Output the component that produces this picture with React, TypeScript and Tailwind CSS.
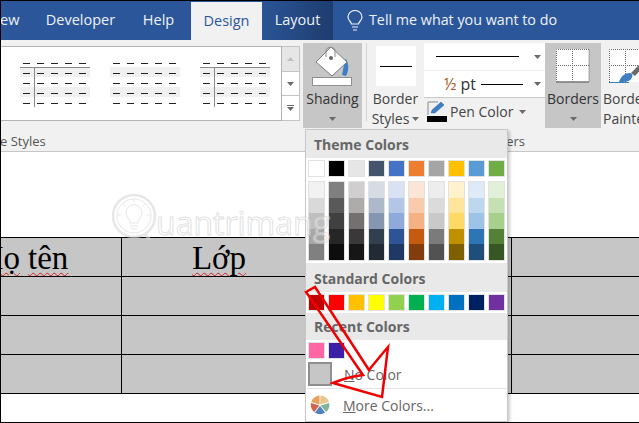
const themeTop = ['bg-[#ffffff]', 'bg-[#000000]', 'bg-[#e7e6e6]', 'bg-[#44546a]', 'bg-[#4472c4]', 'bg-[#ed7d31]', 'bg-[#a5a5a5]', 'bg-[#ffc000]', 'bg-[#5b9bd5]', 'bg-[#70ad47]']

const themeTints = [
  ['bg-[#f2f2f2]', 'bg-[#d9d9d9]', 'bg-[#bfbfbf]', 'bg-[#a6a6a6]', 'bg-[#808080]'],
  ['bg-[#7f7f7f]', 'bg-[#595959]', 'bg-[#404040]', 'bg-[#262626]', 'bg-[#0d0d0d]'],
  ['bg-[#d0cece]', 'bg-[#aeabab]', 'bg-[#757070]', 'bg-[#3a3838]', 'bg-[#171616]'],
  ['bg-[#d6dce4]', 'bg-[#adb9ca]', 'bg-[#8496b0]', 'bg-[#323f4f]', 'bg-[#222a35]'],
  ['bg-[#d9e2f3]', 'bg-[#b4c6e7]', 'bg-[#8eaadb]', 'bg-[#2f5496]', 'bg-[#1f3864]'],
  ['bg-[#fbe5d5]', 'bg-[#f7cbac]', 'bg-[#f4b183]', 'bg-[#c55a11]', 'bg-[#833c0b]'],
  ['bg-[#ededed]', 'bg-[#dbdbdb]', 'bg-[#c9c9c9]', 'bg-[#7b7b7b]', 'bg-[#525252]'],
  ['bg-[#fff2cc]', 'bg-[#fee599]', 'bg-[#ffd965]', 'bg-[#bf9000]', 'bg-[#7f6000]'],
  ['bg-[#deeaf6]', 'bg-[#bdd7ee]', 'bg-[#9dc3e6]', 'bg-[#2e75b5]', 'bg-[#1e4e79]'],
  ['bg-[#e2efd9]', 'bg-[#c5e0b3]', 'bg-[#a8d08d]', 'bg-[#538135]', 'bg-[#375623]'],
]

const standard = ['bg-[#c00000]', 'bg-[#ff0000]', 'bg-[#ffc000]', 'bg-[#ffff00]', 'bg-[#92d050]', 'bg-[#00b050]', 'bg-[#00b0f0]', 'bg-[#0070c0]', 'bg-[#002060]', 'bg-[#7030a0]']
const recent = ['bg-[#ff66a3]', 'bg-[#3b1fa6]']

function Caret({ className = '' }: { className?: string }) {
  return (
    <svg width="7" height="4" viewBox="0 0 7 4" className={className}>
      <path d="M0 0h7L3.5 4z" fill="#6a6a6a" />
    </svg>
  )
}

function TablePreview({ vertical, header }: { vertical?: boolean; header?: boolean }) {
  const xs = [3, 17, 31, 45, 59]
  const ys = [2, 12, 22, 32, 42]
  return (
    <svg width="70" height="46" viewBox="0 0 70 46">
      <rect x="0" y="6" width="70" height="10" fill="#f0f0f0" />
      <rect x="0" y="26" width="70" height="10" fill="#f0f0f0" />
      {ys.map((y) =>
        xs.map((x) => <path key={`${x}-${y}`} d={`M${x} ${y + 0.5}h7`} stroke="#222" strokeWidth="1" />),
      )}
      {header && <path d="M0 6.5h70" stroke="#8a8a8a" />}
      {vertical && <path d="M14.5 6v40" stroke="#8a8a8a" />}
    </svg>
  )
}

function ShadingIcon() {
  return (
    <svg width="42" height="42" viewBox="0 0 42 42">
      <path d="M34 15c3 5 3 11 0 17l-4-1 3-15z" fill="#3f7fc1" />
      <path d="M19 3l16 15-15 14L4 18z" fill="#fff" stroke="#7a7a7a" />
      <path d="M14 13V7c0-5 9-5 9 0v6" fill="none" stroke="#8a8a8a" strokeWidth="1" />
      <circle cx="19" cy="14" r="2" fill="#666" />
      <rect x="0.5" y="33.5" width="39" height="8" fill="#fff" stroke="#8f8f8f" />
    </svg>
  )
}

function BordersIcon({ painter }: { painter?: boolean }) {
  return (
    <svg width="34" height="34" viewBox="0 0 34 34">
      <rect x="0" y="0" width="33" height="33" fill="#fff" />
      <path d="M.5 33V.5h32.500V33M16.500 0v33M0 16.500h33" fill="none" stroke="#666" strokeDasharray="1 1" />
      {painter ? (
        <>
          <path d="M0 33.500h20" stroke="#3f7fc1" />
          <path d="M10 33c2-6 6-9 11-9 3 0 3 4 1 6-2 3-7 3-12 3z" fill="#3f7fc1" />
          <path d="M22 24l8-8 4 2-8 9z" fill="#6a6a6a" />
        </>
      ) : (
        <path d="M0 33h33" stroke="#777" strokeWidth="1.500" />
      )}
    </svg>
  )
}

function PenIcon() {
  return (
    <svg width="20" height="21" viewBox="0 0 20 21">
      <path d="M1 14V1h10" fill="none" stroke="#8a8a8a" />
      <path d="M4 12l1-3L14 1l3 3-9 8z" fill="#3f7fc1" stroke="#2f6ca8" strokeWidth=".5" />
      <rect x="0" y="15" width="20" height="6" fill="#000" />
    </svg>
  )
}

function Pie() {
  return (
    <svg width="20" height="20" viewBox="0 0 20 20">
      <path d="M10 9.500L10.500 .5c4 .2 7.500 3 8.500 6.500z" fill="#e6c88c" />
      <path d="M10.500 10.500l8.700-2.500c.8 3.500-.5 7-3.200 9z" fill="#7fb39c" />
      <path d="M10 11l5 6.500c-3 2.300-7 2.300-10 0z" fill="#4f81bd" />
      <path d="M9.300 10.500l-5 6.500C1.500 15 .2 11.500 1 8z" fill="#d0654e" />
      <path d="M9.500 9.500L1.200 7C2.300 3.500 5.500 1 9.500.5z" fill="#e8a05a" />
    </svg>
  )
}

function Watermark() {
  return (
    <div className="absolute left-[111px] top-[192px] flex items-start opacity-60 pointer-events-none">
      <svg width="46" height="50" viewBox="0 0 46 50" fill="none" stroke="#d8d8d8">
        <circle cx="23" cy="24" r="21" strokeWidth="2.500" />
        <circle cx="23" cy="24" r="17" />
        <path d="M17 26a8 8 0 1 1 12 0c-2 2-2 4-2 5h-8c0-1 0-3-2-5zM19 34h8M20 37h6" />
        <path d="M23 7v3M34 12l-2 2M12 12l2 2M39 23h-3M7 23h3" />
        <path d="M34 42l5 6" strokeWidth="3" />
      </svg>
      <span className="font-['Open_Sans',sans-serif] text-[32px] leading-[50px] -ml-[1px] mt-[6px] text-white/70 [-webkit-text-stroke:1px_#cfcfcf]">
        uantrimang
      </span>
    </div>
  )
}

function RedArrow() {
  return (
    <svg width="639" height="423" viewBox="0 0 639 423" className="absolute left-0 top-0 pointer-events-none">
      <path
        d="M306 292L315 287L369 370Q377 360 388 347L382 397L333 383Q347 377 363 375Z"
        fill="none"
        stroke="#f00000"
        strokeWidth="2.500"
      />
    </svg>
  )
}

function MenuHeader({ title, className = '' }: { title: string; className?: string }) {
  return (
    <div className={`bg-[#e9e9e9] flex items-center pl-[8px] font-bold text-[14px] text-[#666666] ${className}`}>
      {title}
    </div>
  )
}

function SwatchRow({ colors }: { colors: string[] }) {
  return (
    <div className="flex gap-[3px] pl-[2px]">
      {colors.map((c, i) => (
        <div key={i} className={`w-[17px] h-[17px] border border-[#e0e2e4] ${c}`} />
      ))}
    </div>
  )
}

function ColorMenu() {
  return (
    <div className="absolute left-[305px] top-[129px] w-[203px] h-[293px] bg-white border border-[#c8c8c8] shadow-[2px_2px_3px_rgba(0,0,0,0.2)] flex flex-col">
      <MenuHeader title="Theme Colors" className="h-[28px]" />
      <div className="pt-[2px]">
        <SwatchRow colors={themeTop} />
      </div>
      <div className="flex gap-[3px] pl-[2px] pt-[4px]">
        {themeTints.map((col, i) => (
          <div key={i} className="w-[17px] h-[80px] border border-[#e0e2e4] flex flex-col">
            {col.map((c) => (
              <div key={c} className={`flex-1 ${c}`} />
            ))}
          </div>
        ))}
      </div>
      <MenuHeader title="Standard Colors" className="h-[29px] mt-[2px] pt-[2px]" />
      <div className="pt-[2px]">
        <SwatchRow colors={standard} />
      </div>
      <MenuHeader title="Recent Colors" className="h-[27px] mt-[2px]" />
      <div className="pt-[2px]">
        <SwatchRow colors={recent} />
      </div>
      <div className="flex items-center h-[24px] mt-[3px] pl-[2px] text-[14px] text-[#666666]">
        <div className="w-[24px] h-[24px] bg-[#c6c6c6] border-2 border-[#8f8f8f]" />
        <span className="ml-[12px]">
          <span className="underline">N</span>o Color
        </span>
      </div>
      <div className="mx-[1px] h-px bg-[#e2e2e2] mt-[2px]" />
      <div className="flex items-center flex-1 pl-[4px] text-[14px] text-[#666666]">
        <Pie />
        <span className="ml-[13px]">
          <span className="underline">M</span>ore Colors...
        </span>
      </div>
    </div>
  )
}

function Ribbon() {
  return (
    <div className="h-[112px] bg-[#f1f1f1] border-b border-[#c6c6c6] flex flex-col text-[14px] text-[#444444]">
      <div className="h-[85px] mt-[3px] flex items-start">
        {/* Table styles gallery */}
        <div className="w-[283px] h-[75px] mt-[3px] -ml-px bg-white border border-[#b4b4b4] flex gap-[20px] pl-[20px] pt-[14px]">
          <TablePreview vertical header />
          <TablePreview />
          <TablePreview vertical header />
        </div>
        <div className="w-[18px] h-[75px] mt-[3px] flex flex-col border border-l-0 border-[#c4c4c4]">
          <div className="h-[25px] bg-[#e6e6e6] flex items-center justify-center border-b border-[#c4c4c4]">
            <svg width="7" height="4" viewBox="0 0 7 4"><path d="M0 4h7L3.500 0z" fill="#c0c0c0" /></svg>
          </div>
          <div className="h-[24px] bg-white flex items-center justify-center border-b border-[#c4c4c4]">
            <Caret />
          </div>
          <div className="flex-1 bg-white flex flex-col items-center justify-center gap-[1px]">
            <div className="w-[7px] h-px bg-[#6a6a6a]" />
            <Caret />
          </div>
        </div>

        {/* Shading */}
        <div className="w-[59px] h-[85px] ml-[3px] bg-[#c6c6c6] flex flex-col items-center">
          <div className="mt-[1px] h-[42px]"><ShadingIcon /></div>
          <div className="leading-[20px] mt-[3px] text-[#333333]">Shading</div>
          <Caret className="mt-[8px]" />
        </div>
        <div className="w-px h-[78px] bg-[#d4d4d4] ml-[4px]" />

        {/* Border styles */}
        <div className="w-[57px] flex flex-col items-center">
          <div className="w-[40px] h-[40px] mt-[3px] bg-white flex items-center justify-center">
            <div className="w-[32px] h-px bg-black" />
          </div>
          <div className="leading-[20px] mt-[3px]">Border</div>
          <div className="leading-[20px] flex items-center gap-[3px]">
            Styles <Caret />
          </div>
        </div>

        {/* Line style, weight, pen */}
        <div className="w-[121px] flex flex-col">
          <div className="h-[27px] bg-white flex items-center pl-[12px] pr-[4px]">
            <div className="w-[83px] h-px bg-black" />
            <Caret className="ml-auto mr-[0px]" />
          </div>
          <div className="h-[27px] mt-[1px] bg-white border-b border-[#c8c8c8] flex items-center pl-[20px] pr-[4px]">
            <span className="text-[#333333] text-[16px] whitespace-nowrap">
              <span className="text-[#a0561a]">½</span> pt
            </span>
            <div className="w-[42px] h-px bg-black ml-[5px]" />
            <Caret className="ml-auto" />
          </div>
          <div className="flex items-center mt-[3px] pl-[3px]">
            <PenIcon />
            <span className="ml-[3px]">Pen Color</span>
            <Caret className="ml-[6px]" />
          </div>
        </div>

        {/* Borders */}
        <div className="w-[56px] h-[85px] bg-[#c6c6c6] flex flex-col items-center">
          <div className="mt-[6px] h-[34px]"><BordersIcon /></div>
          <div className="leading-[20px] mt-[6px] text-[#333333]">Borders</div>
          <Caret className="mt-[8px]" />
        </div>

        {/* Border painter runs off the right edge */}
        <div className="ml-[2px] flex-1 overflow-hidden flex flex-col">
          <div className="mt-[6px] ml-[6px] h-[34px]"><BordersIcon painter /></div>
          <div className="leading-[20px] mt-[6px]">Border</div>
          <div className="leading-[20px]">Painter</div>
        </div>
      </div>
      <div className="flex justify-between h-[20px] items-center mt-[4px] text-[13px] text-[#555555]">
        <span>e Styles</span>
        <span className="mr-[114px]">ers</span>
      </div>
    </div>
  )
}

function DocTable() {
  const rows = [0, 1, 2]
  const cols = [0, 1, 2, 3]
  const wavy = 'underline decoration-wavy decoration-[#d02020] decoration-1 underline-offset-[3px]'
  return (
    <div className="mt-[85px] overflow-hidden">
      <div className="-ml-[73px] w-[782px] grid grid-cols-[repeat(4,195px)] bg-[#c6c6c6] border-t border-b border-black">
        <div className="h-[38px] border-r border-black flex justify-center gap-[8px] font-['Liberation_Serif',serif] text-[33px] leading-[40px] text-black">
          <span className={wavy}>Họ</span>
          <span className={wavy}>tên</span>
        </div>
        <div className="h-[38px] border-r border-black text-center font-['Liberation_Serif',serif] text-[33px] leading-[40px] text-black">
          <span className={wavy}>Lớp</span>
        </div>
        <div className="h-[38px] border-r border-black" />
        <div className="h-[38px]" />
        {rows.map((r) =>
          cols.map((c) => (
            <div key={`${r}-${c}`} className={`h-[39px] border-t border-black ${c < 3 ? 'border-r' : ''}`} />
          )),
        )}
      </div>
    </div>
  )
}

export default function App() {
  return (
    <div className="relative w-[639px] h-[423px] overflow-hidden bg-white font-['Open_Sans',sans-serif]">
      {/* Tabs */}
      <div className="h-[40px] bg-[#2b579a] flex text-[14.5px] text-[#eef2f8] leading-[40px]">
        <div className="w-[32px] pr-[14px] text-right">ew</div>
        <div className="w-[97px] text-center">Developer</div>
        <div className="w-[62px] text-center pr-[3px]">Help</div>
        <div className="w-[71px] mt-[2px] h-[38px] bg-[#f1f1f1] text-[#2b579a] text-center leading-[38px]">Design</div>
        <div className="w-[71px] bg-linear-to-r from-[#2a5596] to-[#1e3c6e] text-center">Layout</div>
        <div className="flex items-center ml-[14px]">
          <svg width="16" height="21" viewBox="0 0 16 21" fill="none" stroke="#eef2f8" strokeWidth="1.200">
            <path d="M4.500 14c0-2-3.500-3.500-3.500-7a7 6.500 0 0 1 14 0c0 3.500-3.500 5-3.500 7z" />
            <path d="M5 17h6M6 20h4" />
          </svg>
          <span className="ml-[6px] text-[14.3px]">Tell me what you want to do</span>
        </div>
      </div>

      <Ribbon />
      <DocTable />
      <ColorMenu />
      <Watermark />
      <RedArrow />

      {/* Thin black frame of the screenshot */}
      <div className="absolute inset-0 border-l border-t border-b border-black pointer-events-none" />
    </div>
  )
}
